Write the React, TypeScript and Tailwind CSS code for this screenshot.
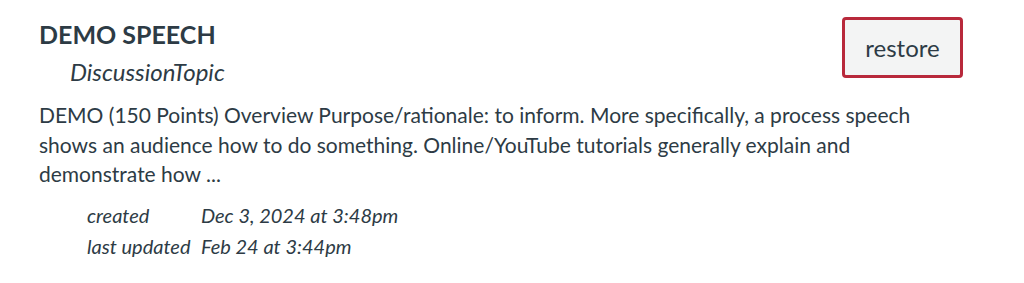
export default function App() {
  return (
    <div className="w-[1024px] h-[283px] bg-white text-[#2d3b45] font-['Lato',sans-serif] overflow-hidden pl-[39px] pr-[61px] pt-[18px]">
      <div className="flex items-start justify-between">
        <div>
          <h2 className="text-[25px] font-bold leading-[32px]">DEMO SPEECH</h2>
          <div className="pl-[31px] mt-[7px] text-[24px] italic leading-[30px]">DiscussionTopic</div>
        </div>
        <button className="mt-[-1px] h-[61px] w-[121px] rounded-[4px] border-[3px] border-[#b8293b] bg-[#f3f4f4] text-[24px] leading-none text-[#2d3b45]">
          restore
        </button>
      </div>
      <p className="mt-[13px] w-[900px] text-[21px] leading-[29.5px]">
        DEMO (150 Points) Overview Purpose/rationale: to inform. More specifically, a process speech shows an audience how to do something. Online/YouTube tutorials generally explain and demonstrate how ...
      </p>
      <div className="mt-[11px] pl-[48px] text-[20px] italic leading-[31px]">
        <div className="flex">
          <span className="w-[114px] shrink-0">created</span>
          <span>Dec 3, 2024 at 3:48pm</span>
        </div>
        <div className="flex">
          <span className="w-[114px] shrink-0">last updated</span>
          <span>Feb 24 at 3:44pm</span>
        </div>
      </div>
    </div>
  );
}
